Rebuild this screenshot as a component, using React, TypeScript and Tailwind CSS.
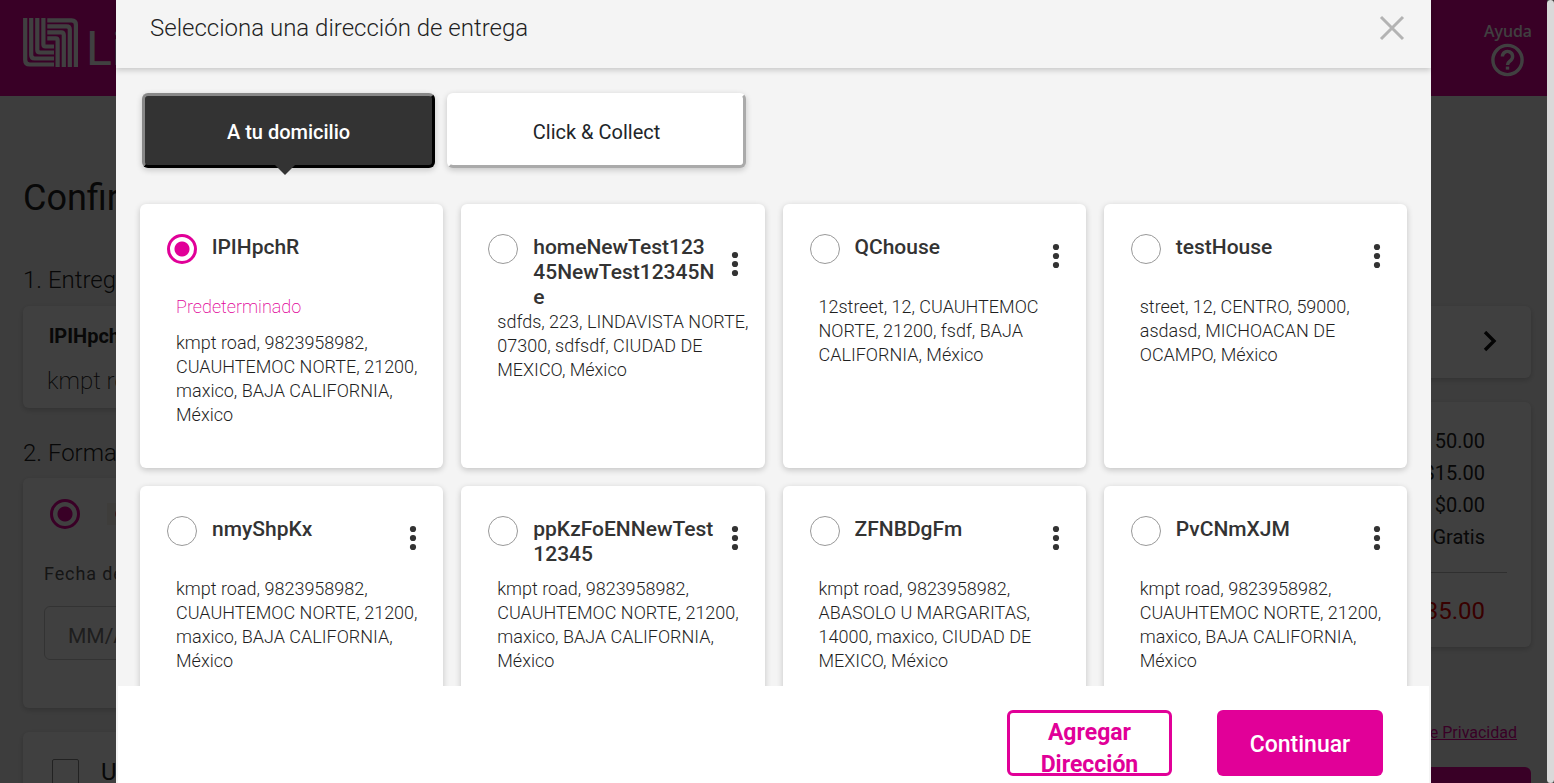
import { useState } from "react";

type Address = { name: string; text: string; isDefault?: boolean };

const addresses: Address[] = [
  { name: "lPIHpchR", text: "kmpt road, 9823958982, CUAUHTEMOC NORTE, 21200, maxico, BAJA CALIFORNIA, México", isDefault: true },
  { name: "homeNewTest12345NewTest12345Ne", text: "sdfds, 223, LINDAVISTA NORTE, 07300, sdfsdf, CIUDAD DE MEXICO, México" },
  { name: "QChouse", text: "12street, 12, CUAUHTEMOC NORTE, 21200, fsdf, BAJA CALIFORNIA, México" },
  { name: "testHouse", text: "street, 12, CENTRO, 59000, asdasd, MICHOACAN DE OCAMPO, México" },
  { name: "nmyShpKx", text: "kmpt road, 9823958982, CUAUHTEMOC NORTE, 21200, maxico, BAJA CALIFORNIA, México" },
  { name: "ppKzFoENNewTest12345", text: "kmpt road, 9823958982, CUAUHTEMOC NORTE, 21200, maxico, BAJA CALIFORNIA, México" },
  { name: "ZFNBDgFm", text: "kmpt road, 9823958982, ABASOLO U MARGARITAS, 14000, maxico, CIUDAD DE MEXICO, México" },
  { name: "PvCNmXJM", text: "kmpt road, 9823958982, CUAUHTEMOC NORTE, 21200, maxico, BAJA CALIFORNIA, México" },
];

const radioClass =
  "size-[30px] shrink-0 appearance-none rounded-full border border-[#999] bg-white checked:border-[3px] checked:border-[#e10098] checked:bg-[radial-gradient(circle,#e10098_7px,#fff_8px)]";
const panelClass = "rounded-md bg-white shadow-[0_2px_6px_rgba(0,0,0,0.2)]";

function Logo() {
  return (
    <svg width="55" height="49" viewBox="0 0 55 49" fill="none" stroke="#fff" strokeWidth="4.2" aria-hidden="true">
      <path d="M2.2 0V42Q2.2 46.5 6.7 46.5H31" />
      <path d="M8.2 0V37Q8.2 40.5 11.7 40.5H31" />
      <path d="M14.3 0V32Q14.3 34.5 17 34.5H31" />
      <path d="M20.4 0V26.5Q20.4 28.5 22.4 28.5H31" />
      <path d="M24.3 2.4H48.5Q52.9 2.4 52.9 6.8V49" />
      <path d="M24.3 8.3H43.5Q46.8 8.3 46.8 11.6V49" />
      <path d="M24.3 14.3H38.2Q40.8 14.3 40.8 16.9V49" />
      <path d="M24.3 20.3H32.7Q34.6 20.3 34.6 22.2V49" />
    </svg>
  );
}

function Checkout() {
  return (
    <div className="text-[#222]">
      <header className="flex h-24 items-start justify-between bg-[#e10098] pr-[15px] pl-[23px] text-white">
        <a href="#inicio" className="flex items-end gap-2 pt-[18px]">
          <Logo />
          <span className="text-5xl leading-9">Liverpool</span>
        </a>
        <a href="#ayuda" className="flex flex-col items-end pt-5 font-['Noto_Sans',sans-serif] text-base leading-[22px] font-medium">
          Ayuda
          <svg className="mr-2" width="33" height="36" viewBox="0 0 33 36" fill="none" stroke="#fff" strokeWidth="3.4">
            <circle cx="16.5" cy="18" r="14.6" />
            <path d="M11.4 14.5a5.1 5.1 0 1 1 8.4 3.9c-2 1.6-3.3 2.3-3.3 4.6" />
            <path d="M16.5 24.6v3" />
          </svg>
        </a>
      </header>
      <main className="px-4 pl-[23px]">
        <h1 className="pt-20 text-4xl leading-[44px]">Confirma tu compra</h1>
        <h2 className="mt-[44px] text-2xl leading-8 font-light">1. Entrega</h2>
        <div className="mt-[10px] flex items-start gap-6">
          <div className="flex-1">
            <section className={`${panelClass} h-[102px] pt-[18px] pl-6`}>
              <p className="pl-0.5 text-xl leading-6 font-bold">lPIHpchR</p>
              <p className="mt-[17px] text-2xl leading-8 font-extralight">kmpt road</p>
            </section>
            <h2 className="mt-[29px] text-2xl leading-8 font-light">2. Forma de pago</h2>
            <section className={`${panelClass} mt-[9px] h-[230px] px-[21px] pt-[21px]`}>
              <div className="flex items-center gap-[27px] pl-1.5">
                <input type="radio" name="pago" defaultChecked aria-label="Tarjeta" className={radioClass} />
                <svg className="opacity-70" width="36" height="22" viewBox="0 0 36 22">
                  <rect width="36" height="22" fill="#f3f0e4" />
                  <circle cx="14" cy="11" r="6" fill="#d5202c" />
                  <circle cx="23" cy="11" r="6" fill="#f0a020" />
                </svg>
              </div>
              <label htmlFor="vence" className="mt-[33px] block text-lg leading-6 tracking-wider text-[#555]">Fecha de vencimiento</label>
              <input id="vence" placeholder="MM/AA" className="mt-5 h-[54px] w-60 rounded-md border border-[#ccc] px-[23px] pt-1.5 text-[21px] placeholder:text-[#777]" />
            </section>
            <section className={`${panelClass} mt-6 h-[120px] pt-[26px] pl-[29px]`}>
              <label className="flex items-center gap-[22px] text-2xl leading-7">
                <input type="checkbox" className="size-[27px] appearance-none rounded-xs border border-[#888]" />
                Usar monedero
              </label>
            </section>
          </div>
          <aside className="w-[400px]">
            <button aria-label="Ver dirección" className={`${panelClass} flex h-[72px] w-full items-center justify-end pr-8`}>
              <svg width="18" height="22" viewBox="0 0 18 22" fill="none" stroke="#111" strokeWidth="3.4">
                <path d="M4 1l9 9-9 9" />
              </svg>
            </button>
            <section className={`${panelClass} mt-6 h-[245px] px-6 pt-[23px]`}>
              <ul className="pr-[22px] text-right text-xl leading-8">
                <li>50.00</li>
                <li>$15.00</li>
                <li>$0.00</li>
                <li>Gratis</li>
              </ul>
              <p className="mt-[19px] border-t border-[#bbb] pt-[22px] pr-[22px] text-right text-2xl leading-8 text-[#e00000]">$35.00</p>
            </section>
            <a href="#privacidad" className="mt-[74px] mr-[14px] block text-right text-base leading-6 text-[#e10098] underline">Aviso de Privacidad</a>
            <button aria-label="Finalizar compra" className="mt-[22px] h-14 w-full rounded-md bg-[#e10098]" />
          </aside>
        </div>
      </main>
    </div>
  );
}

function AddressCard({ address, checked, onSelect }: { address: Address; checked: boolean; onSelect: () => void }) {
  return (
    <li className={`${panelClass} h-[264px] pt-[30px] pr-3 pl-[27px]`}>
      <div className="flex min-h-[61px] items-center">
        <label className="flex min-w-0 flex-1 items-start gap-[15px] self-stretch text-[21px] leading-[25px] font-medium">
          <input type="radio" name="direccion" checked={checked} onChange={onSelect} className={radioClass} />
          <span className="w-[182px] pt-px break-all">{address.name}</span>
        </label>
        {!address.isDefault && (
          <button aria-label={`Opciones de ${address.name}`} className="mr-1 mb-[17px] px-2">
            <svg width="12" height="26" viewBox="0 0 12 26" fill="#333">
              <circle cx="6" cy="4" r="3.1" />
              <circle cx="6" cy="13" r="3.1" />
              <circle cx="6" cy="22" r="3.1" />
            </svg>
          </button>
        )}
      </div>
      <div className="pl-[9px] text-lg leading-6 font-light text-[#1f1f1f]">
        {address.isDefault && <p className="mb-3 font-extralight text-[#e10098]">Predeterminado</p>}
        <p>{address.text}</p>
      </div>
    </li>
  );
}

function AddressDialog() {
  const [selected, setSelected] = useState("lPIHpchR");
  return (
    <div role="dialog" aria-label="Selecciona una dirección de entrega" className="mx-auto flex h-full w-[85%] flex-col bg-[#f4f4f4] text-[#333]">
      <header className="relative flex h-[68px] shrink-0 items-start justify-between pr-[26px] pl-[34px] shadow-[0_2px_6px_rgba(0,0,0,0.2)]">
        <h2 className="pt-3 text-2xl leading-8 font-light text-[#1f1f1f]">Selecciona una dirección de entrega</h2>
        <button aria-label="Cerrar" className="mt-[15px]">
          <svg width="26" height="26" viewBox="0 0 26 26" stroke="#b3b3b3" strokeWidth="3">
            <path d="M2 2l22 22M24 2L2 24" />
          </svg>
        </button>
      </header>
      <div className="min-h-0 flex-1 overflow-hidden px-6">
        <div className="mt-[25px] ml-0.5 flex gap-3 text-xl">
          <button className="relative h-[75px] w-[293px] rounded-md border-[3px] border-t-[#888] border-r-black border-b-black border-l-[#888] bg-[#333] pt-0.5 font-medium text-white shadow-[0_2px_6px_rgba(0,0,0,0.2)]">
            A tu domicilio
            <svg className="absolute top-full left-1/2 -translate-x-[14px]" width="20" height="10" viewBox="0 0 20 10" fill="#333">
              <path d="M0 0h20L10 10z" />
            </svg>
          </button>
          <button className="h-[75px] w-[299px] rounded-md border-[3px] border-t-white border-r-[#aaa] border-b-[#aaa] border-l-white bg-white pt-0.5 text-[#212529] shadow-[0_2px_6px_rgba(0,0,0,0.2)]">
            Click &amp; Collect
          </button>
        </div>
        <ul className="mt-9 grid grid-cols-4 gap-[18px]">
          {addresses.map((a) => (
            <AddressCard key={a.name} address={a} checked={selected === a.name} onSelect={() => setSelected(a.name)} />
          ))}
        </ul>
      </div>
      <footer className="mx-0.5 flex h-[97px] shrink-0 items-start justify-end gap-[45px] bg-white pt-6 pr-[46px] text-[23px] leading-8 font-medium">
        <button className="flex h-[66px] w-[165px] justify-center rounded-md border-[3px] border-[#e10098] px-6 pt-1 font-bold text-[#e10098]">Agregar Dirección</button>
        <button className="h-[66px] w-[166px] rounded-md bg-[#e10098] pt-1 text-white">Continuar</button>
      </footer>
    </div>
  );
}

export default function App() {
  return (
    <div className="flex h-screen bg-[#3c3c3c] font-[Roboto,sans-serif]">
      <div className="relative min-w-0 flex-1 overflow-hidden bg-[#f4f4f4]">
        <Checkout />
        <div className="absolute inset-0 bg-black/75">
          <AddressDialog />
        </div>
      </div>
      <div className="w-[7px] rounded-full bg-[#d9d9d9]" />
    </div>
  );
}
